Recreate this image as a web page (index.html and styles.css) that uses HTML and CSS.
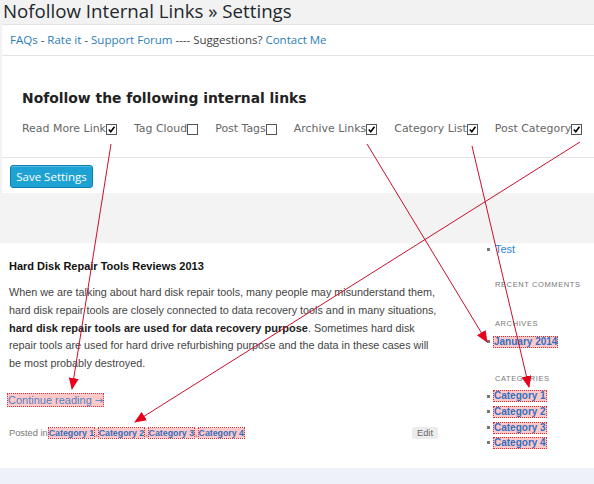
FILE: index.html
```html
<!DOCTYPE html>
<html>
<head>
<meta charset="utf-8">
<title>Nofollow Internal Links</title>
<link rel="stylesheet" href="styles.css">
</head>
<body>
<div class="page">
  <div class="admin">
    <h1 class="title">Nofollow Internal Links » Settings</h1>
    <div class="links-bar"><a href="#">FAQs</a> - <a href="#">Rate it</a> - <a href="#">Support Forum</a> ---- Suggestions? <a href="#">Contact Me</a></div>
    <div class="options">
      <h2 class="opt-title">Nofollow the following internal links</h2>
      <div class="checks">
        <label class="check">Read More Link<span class="cb"><svg viewBox="0 0 10 10"><path d="M2 5 L4.2 7.5 L8.3 2" /></svg></span></label>
        <label class="check">Tag Cloud<span class="cb"></span></label>
        <label class="check">Post Tags<span class="cb"></span></label>
        <label class="check">Archive Links<span class="cb"><svg viewBox="0 0 10 10"><path d="M2 5 L4.2 7.5 L8.3 2" /></svg></span></label>
        <label class="check">Category List<span class="cb"><svg viewBox="0 0 10 10"><path d="M2 5 L4.2 7.5 L8.3 2" /></svg></span></label>
        <label class="check">Post Category<span class="cb"><svg viewBox="0 0 10 10"><path d="M2 5 L4.2 7.5 L8.3 2" /></svg></span></label>
      </div>
    </div>
    <div class="save-area"><button class="btn-primary">Save Settings</button></div>
    <div class="gap"></div>
  </div>

  <div class="blog">
    <div class="main">
      <h3 class="post-title">Hard Disk Repair Tools Reviews 2013</h3>
      <p class="post-text">When we are talking about hard disk repair tools, many people may misunderstand them,<br>hard disk repair tools are closely connected to data recovery tools and in many situations,<br><strong>hard disk repair tools are used for data recovery purpose</strong>. Sometimes hard disk<br>repair tools are used for hard drive refurbishing purpose and the data in these cases will<br>be most probably destroyed.</p>
      <p class="more"><a href="#" class="hl more-link">Continue reading <span class="arr">→</span></a></p>
      <div class="meta">
        <span class="posted">Posted in<span class="hl-group"><a href="#" class="hl-b">Category 1</a>,<a href="#" class="hl-b">Category 2</a>,<a href="#" class="hl-b">Category 3</a>,<a href="#" class="hl-b">Category 4</a></span></span>
        <span class="edit">Edit</span>
      </div>
    </div>
    <div class="sidebar">
      <ul class="wlist first">
        <li><a href="#" class="plain">Test</a></li>
      </ul>
      <h4 class="wtitle w-recent">RECENT COMMENTS</h4>
      <h4 class="wtitle w-arch">ARCHIVES</h4>
      <ul class="wlist">
        <li><a href="#" class="hl-side">January 2014</a></li>
      </ul>
      <h4 class="wtitle w-cat">CATEGORIES</h4>
      <ul class="wlist">
        <li><a href="#" class="hl-side">Category 1</a></li>
        <li><a href="#" class="hl-side">Category 2</a></li>
        <li><a href="#" class="hl-side">Category 3</a></li>
        <li><a href="#" class="hl-side">Category 4</a></li>
      </ul>
    </div>
  </div>
  <div class="footer"></div>

  <svg class="arrows" width="594" height="484" viewBox="0 0 594 484">
    <defs>
      <marker id="ah" markerWidth="12" markerHeight="10" refX="11" refY="5" orient="auto" markerUnits="userSpaceOnUse">
        <path d="M0 0 L12 5 L0 10 Z" fill="#e8001a"/>
      </marker>
    </defs>
    <line x1="111" y1="144" x2="72" y2="389" marker-end="url(#ah)"/>
    <line x1="367" y1="144" x2="487" y2="342" marker-end="url(#ah)"/>
    <line x1="472" y1="146" x2="529" y2="387" marker-end="url(#ah)"/>
    <line x1="580" y1="142" x2="135" y2="422" marker-end="url(#ah)"/>
  </svg>
</div>
</body>
</html>
```

FILE: styles.css
```css
* { box-sizing: border-box; margin: 0; padding: 0; }

html, body {
  width: 594px;
  height: 484px;
  overflow: hidden;
  background: #fff;
}

body {
  font-family: "Open Sans", "Liberation Sans", sans-serif;
}

.page {
  position: relative;
  width: 594px;
  height: 484px;
}

a { text-decoration: none; }

/* ---------- admin settings ---------- */
.admin {
  background: #f2f2f2;
  padding-left: 2px;
}

.title {
  height: 24px;
  margin-left: -2px;
  padding-left: 3px;
  font-size: 18.7px;
  font-weight: 400;
  line-height: 22px;
  color: #23282d;
  white-space: nowrap;
}

.links-bar {
  height: 32px;
  background: #fff;
  border-top: 1px solid #e3e3e3;
  border-bottom: 1px solid #e3e3e3;
  padding-left: 8px;
  font-size: 11.5px;
  line-height: 30px;
  color: #444;
  white-space: nowrap;
}

.links-bar a { color: #2a7db5; }

.options {
  height: 102px;
  background: #fff;
  border-bottom: 1px solid #e3e3e3;
  padding: 32px 0 0 20px;
}

.opt-title {
  font-family: "DejaVu Sans", Verdana, sans-serif;
  font-size: 13.9px;
  font-weight: 700;
  line-height: 20px;
  color: #222;
  white-space: nowrap;
}

.checks {
  display: flex;
  gap: 17px;
  margin-top: 14px;
  font-family: "DejaVu Sans", Verdana, sans-serif;
  font-size: 10.95px;
  line-height: 14px;
  color: #666;
  white-space: nowrap;
}

.check {
  display: flex;
  align-items: center;
}

.cb {
  display: inline-block;
  width: 11px;
  height: 11px;
  border: 1px solid #555;
  background: #fff;
  margin-top: 1px;
}

.cb svg {
  display: block;
  width: 9px;
  height: 9px;
  fill: none;
  stroke: #000;
  stroke-width: 1.8;
}

.save-area {
  height: 35px;
  background: #fff;
  padding: 7px 0 0 8px;
}

.btn-primary {
  display: block;
  width: 83px;
  height: 23px;
  background: #1ea2d4;
  border: 1px solid #0d7fae;
  border-radius: 3px;
  box-shadow: inset 0 1px 0 rgba(130, 205, 235, 0.6);
  color: #fff;
  font-family: "Open Sans", sans-serif;
  font-size: 11.5px;
  line-height: 20px;
}

.gap {
  height: 50px;
  margin-left: -2px;
  background: #f3f3f3;
}

/* ---------- blog ---------- */
.blog {
  display: flex;
  height: 225px;
  background: #fff;
  font-family: "Liberation Sans", Arial, sans-serif;
}

.main {
  width: 480px;
  padding: 16px 0 0 9px;
}

.post-title {
  font-size: 11px;
  font-weight: 700;
  line-height: 14px;
  color: #111;
  white-space: nowrap;
}

.post-text {
  margin-top: 11px;
  font-size: 10.8px;
  line-height: 17.75px;
  color: #444;
  white-space: nowrap;
}

.post-text strong {
  font-size: 11px;
  color: #222;
}

.more {
  margin-top: 18px;
  line-height: 18px;
  font-size: 11px;
}

.hl {
  background: #ffc9c9;
  border: 1px dotted #d2303a;
}

.more-link {
  margin-left: -2px;
  color: #4c82c4;
}

.arr {
  font-family: "DejaVu Sans", sans-serif;
  font-size: 10px;
}

.meta {
  display: flex;
  justify-content: space-between;
  align-items: center;
  width: 429px;
  margin-top: 17px;
  font-size: 9.3px;
  line-height: 13px;
  color: #777;
}

.hl-group {
  background: #ffc9c9;
  color: #777;
  font-size: 8.8px;
}

.hl-b {
  font-weight: 700;
  color: #2f6fc0;
  border: 1px dotted #d2303a;
}

.edit {
  background: #ececec;
  color: #666;
  padding: 0 5px;
  border-radius: 2px;
  line-height: 12px;
}

.sidebar {
  flex: 1;
  padding-left: 3px;
}

.wlist {
  list-style: none;
}

.wlist li {
  position: relative;
  display: flex;
  align-items: center;
  height: 15.6px;
  padding-left: 10px;
}

.wlist li::before {
  content: "";
  position: absolute;
  left: 4px;
  top: 6px;
  width: 3px;
  height: 3px;
  background: #777;
}

.wlist.first li {
  height: 14px;
  margin-top: -1px;
}

.plain {
  margin-left: 2px;
  font-size: 11px;
  color: #2f86d6;
}

.hl-side {
  display: inline-block;
  font-size: 10px;
  font-weight: 700;
  line-height: 10px;
  color: #2f6fc0;
  background: #ffc9c9;
  border: 1px dotted #d2303a;
}

.wtitle {
  padding-left: 12px;
  font-size: 7.5px;
  font-weight: 400;
  line-height: 10px;
  letter-spacing: 0.6px;
  color: #777;
  white-space: nowrap;
}

.w-recent { margin-top: 24px; }
.w-arch { margin-top: 29px; margin-bottom: 5px; }
.w-cat { margin-top: 24px; margin-bottom: 5px; }

.footer {
  height: 16px;
  background: #eef2f8;
}

/* ---------- annotation overlay ---------- */
.arrows {
  position: absolute;
  top: 0;
  left: 0;
  pointer-events: none;
}

.arrows line {
  stroke: #c8102e;
  stroke-width: 1;
}
```
